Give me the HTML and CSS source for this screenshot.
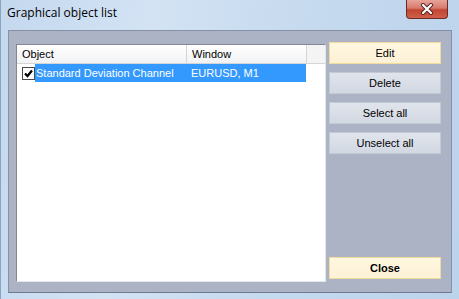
FILE: index.html
```html
<!DOCTYPE html>
<html lang="en">
<head>
    <meta charset="UTF-8">
    <title>Graphical object list</title>
    <link rel="stylesheet" href="styles.css">
</head>
<body>
    <div class="window">
        <div class="titlebar">
            <span class="title">Graphical object list</span>
            <div class="close-x">
                <svg width="14" height="12" viewBox="0 0 14 12">
                    <path d="M3 2 L11 10 M11 2 L3 10" stroke="#5a2020" stroke-width="4" stroke-linecap="round"/>
                    <path d="M3 2 L11 10 M11 2 L3 10" stroke="#ffffff" stroke-width="2.2" stroke-linecap="round"/>
                </svg>
            </div>
        </div>

        <div class="client">
            <div class="list">
                <div class="list-head">
                    <div class="col col-object">Object</div>
                    <div class="col col-window">Window</div>
                    <div class="col col-rest"></div>
                </div>
                <div class="list-row">
                    <span class="check">
                        <svg width="9" height="9" viewBox="0 0 9 9">
                            <path d="M1 4.5 L3.5 7 L8 1.5" fill="none" stroke="#000" stroke-width="2.2"/>
                        </svg>
                    </span>
                    <div class="row-sel">
                        <span class="cell-object">Standard Deviation Channel</span>
                        <span class="cell-window">EURUSD, M1</span>
                    </div>
                </div>
            </div>

            <div class="buttons">
                <button class="btn btn-default">Edit</button>
                <button class="btn">Delete</button>
                <button class="btn">Select all</button>
                <button class="btn">Unselect all</button>
                <div class="spacer"></div>
                <button class="btn btn-default btn-bold">Close</button>
            </div>
        </div>
    </div>
</body>
</html>
```

FILE: styles.css
```css
html, body {
    margin: 0;
    padding: 0;
}
body {
    font-family: "Liberation Sans", Arial, sans-serif;
    font-size: 11px;
    width: 459px;
    height: 299px;
    overflow: hidden;
}
.window {
    width: 459px;
    height: 299px;
    box-sizing: border-box;
    display: flex;
    flex-direction: column;
    background: linear-gradient(100deg, #c4d8ee 0%, #d3e3f4 30%, #c8dbef 55%, #bcd3ec 100%);
    border-left: 1px solid #8aa3c0;
}
.titlebar {
    height: 30px;
    display: flex;
    align-items: flex-start;
    justify-content: space-between;
    flex-shrink: 0;
}
.title {
    font-family: "Open Sans", "Noto Sans", sans-serif;
    font-size: 12px;
    color: #000;
    margin: 4px 0 0 6px;
}
.close-x {
    width: 40px;
    height: 18px;
    margin: 0 11px 0 0;
    border: 1px solid #6b2a24;
    border-top: none;
    border-radius: 0 0 4px 4px;
    background: linear-gradient(#e8a49a 0%, #d77a6c 45%, #c24432 55%, #d0614c 100%);
    display: flex;
    align-items: center;
    justify-content: center;
}
.client {
    flex: 1;
    margin: 0 7px 6px 7px;
    background: #abb3c5;
    border: 1px solid #8590a6;
    border-bottom-color: #6f7a90;
    display: flex;
    gap: 3px;
    padding: 13px 9px 10px 7px;
}
.list {
    width: 308px;
    background: #fff;
    border: 1px solid #828790;
    border-right-color: #e3e6ec;
    border-bottom-color: #e3e6ec;
}
.list-head {
    display: flex;
    height: 18px;
    border-bottom: 1px solid #d5d5d5;
}
.col {
    line-height: 18px;
    padding-left: 5px;
    box-sizing: border-box;
    background: linear-gradient(#ffffff, #f1f2f4);
    border-right: 1px solid #d5d5d5;
}
.col-object {
    width: 170px;
}
.col-window {
    width: 120px;
}
.col-rest {
    flex: 1;
    border-right: none;
    background: #f4f4f4;
}
.list-row {
    display: flex;
    align-items: center;
    height: 18px;
    padding-left: 5px;
}
.check {
    width: 13px;
    height: 13px;
    box-sizing: border-box;
    border: 1px solid #4a4a4a;
    background: #fff;
    display: flex;
    align-items: center;
    justify-content: center;
}
.row-sel {
    display: flex;
    width: 271px;
    height: 18px;
    line-height: 18px;
    background: #3399ff;
    color: #fff;
}
.cell-object {
    width: 155px;
    padding-left: 1px;
}
.buttons {
    width: 112px;
    display: flex;
    flex-direction: column;
    gap: 8px;
    margin: -2px 0 3px 0;
}
.btn {
    height: 22px;
    font-family: "Liberation Sans", Arial, sans-serif;
    font-size: 11px;
    color: #000;
    padding: 0;
    background: linear-gradient(#e0e4ec, #d2d8e2);
    border: 1px solid #c3c9d4;
    border-radius: 0;
}
.btn-default {
    background: linear-gradient(#fff7e0, #fdf1d6);
    border-color: #f1dc9a;
}
.btn-bold {
    font-weight: bold;
}
.spacer {
    flex: 1;
}
```
